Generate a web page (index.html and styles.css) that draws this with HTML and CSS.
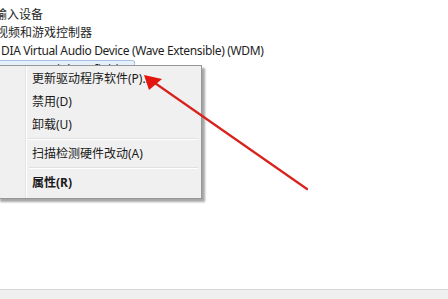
FILE: index.html
```html
<!DOCTYPE html>
<html lang="zh-CN">
<head>
<meta charset="utf-8">
<title>设备管理器</title>
<link rel="stylesheet" href="styles.css">
</head>
<body>
<div class="screen">
  <div class="tree">
    <div class="row cut5">输入设备</div>
    <div class="row cut4">视频和游戏控制器</div>
    <div class="row latin">DIA Virtual Audio Device (Wave Extensible) (WDM)</div>
    <div class="row selected"><span class="sel-text">NVIDIA High Definition Audio</span></div>
  </div>
  <div class="spacer"></div>
  <div class="statusbar"></div>

  <div class="menu">
    <div class="item">更新驱动程序软件(P)...</div>
    <div class="item">禁用(D)</div>
    <div class="item">卸载(U)</div>
    <div class="sep"></div>
    <div class="item">扫描检测硬件改动(A)</div>
    <div class="sep"></div>
    <div class="item bold">属性(R)</div>
  </div>

  <svg class="arrow" width="448" height="299" viewBox="0 0 448 299">
    <line x1="307" y1="189" x2="152" y2="81" stroke="#d8221c" stroke-width="2.2" stroke-linecap="round"/>
    <polygon points="144,75 149,90 162,79" fill="#e3150f"/>
  </svg>
</div>
</body>
</html>
```
FILE: styles.css
```css
html, body {
  margin: 0;
  padding: 0;
  background: #ffffff;
}
.screen {
  position: relative;
  width: 448px;
  height: 299px;
  overflow: hidden;
  display: flex;
  flex-direction: column;
  font-family: "Noto Sans", "Noto Sans CJK SC", sans-serif;
  font-size: 12px;
  color: #1e1e1e;
}
.tree {
  padding-top: 6px;
  display: flex;
  flex-direction: column;
}
.row {
  height: 18px;
  line-height: 18px;
  white-space: nowrap;
  padding-left: 1px;
}
.latin { letter-spacing: -0.35px; }
.cut5 { margin-left: -6px; }
.cut4 { margin-left: -5px; }
.selected {
  margin-top: 0;
  width: 136px;
  height: 17px;
  margin-left: -4px;
  border: 1px solid #a9c3e3;
  border-radius: 2px;
  background: #e6f0fb;
  overflow: hidden;
}
.sel-text {
  color: #1e1e1e;
  padding-left: 6px;
}
.spacer { flex: 1; }
.statusbar {
  height: 9px;
  border-top: 1px solid #d6d6d6;
  background: #efefef;
}
.menu {
  position: absolute;
  left: -3px;
  top: 65px;
  width: 205px;
  padding: 1px 2px 4px 2px;
  box-sizing: border-box;
  background: linear-gradient(to right, #f0f0f0 0, #f0f0f0 27px, #e2e3e3 27px, #e2e3e3 28px, #ffffff 28px, #ffffff 29px, #f0f0f0 29px);
  border: 1px solid #979797;
  box-shadow: 3px 3px 2px rgba(0,0,0,0.35);
  display: flex;
  flex-direction: column;
}
.item {
  height: 23px;
  line-height: 23px;
  padding-left: 32px;
  white-space: nowrap;
  color: #1a1a1a;
}
.bold { font-weight: bold; }
.sep {
  height: 0;
  margin: 2px 1px 2px 29px;
  border-top: 1px solid #e0e0e0;
  border-bottom: 1px solid #ffffff;
}
.arrow {
  position: absolute;
  left: 0;
  top: 0;
}
```
